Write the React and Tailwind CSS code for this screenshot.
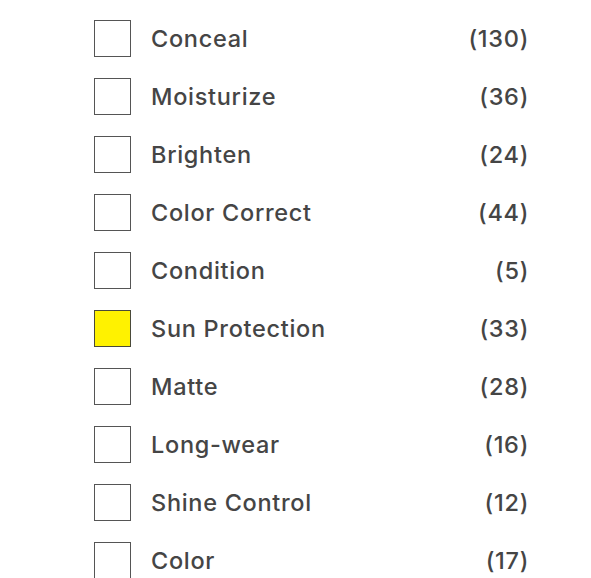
import React from 'react';

const options = [
    { label: 'Conceal', count: 130 },
    { label: 'Moisturize', count: 36 },
    { label: 'Brighten', count: 24 },
    { label: 'Color Correct', count: 44 },
    { label: 'Condition', count: 5 },
    { label: 'Sun Protection', count: 33, checked: true },
    { label: 'Matte', count: 28 },
    { label: 'Long-wear', count: 16 },
    { label: 'Shine Control', count: 12 },
    { label: 'Color', count: 17 },
];

const App = () => {
    return (
        <div className="w-[591px] h-[578px] overflow-hidden bg-white pt-[9px]" style={{ fontFamily: 'Inter, sans-serif' }}>
            <ul>
                {options.map((opt) => (
                    <li key={opt.label} className="flex items-center h-[58px] pl-[94px] pr-[62px]">
                        <span
                            className={
                                opt.checked
                                    ? 'w-[37px] h-[37px] shrink-0 border border-[#4a4a3a] bg-[#fff200]'
                                    : 'w-[37px] h-[37px] shrink-0 border border-[#555555] bg-white'
                            }
                        />
                        <span className="ml-[20px] flex-1 pt-[2px] text-[23.5px] font-medium text-[#454545] tracking-[0.7px]">{opt.label}</span>
                        <span className="pt-[2px] text-[23.5px] font-medium text-[#454545] tracking-[0.7px]">({opt.count})</span>
                    </li>
                ))}
            </ul>
        </div>
    );
};

export default App;
